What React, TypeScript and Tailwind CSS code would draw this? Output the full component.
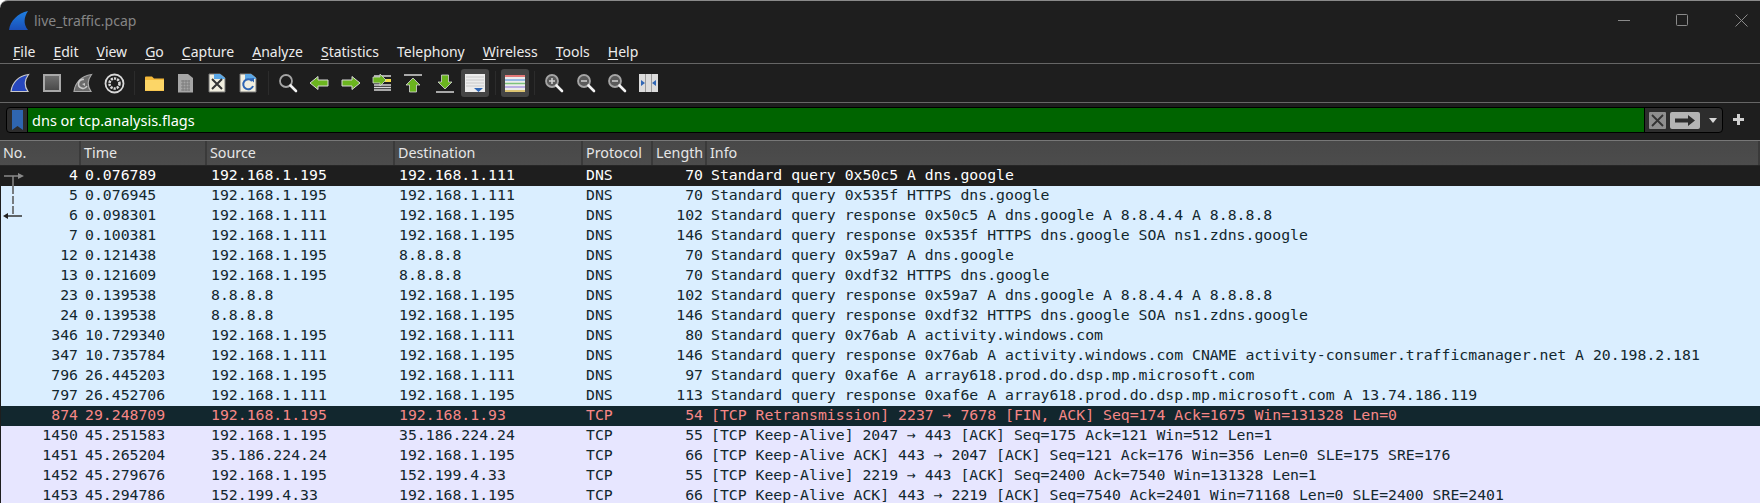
import React from "react";

const A = "192.168.1.195";
const B = "192.168.1.111";

type Row = { no: number; time: string; src: string; dst: string; proto: string; len: number; info: string };

const rows: Row[] = [
  { no: 4, time: "0.076789", src: A, dst: B, proto: "DNS", len: 70, info: "Standard query 0x50c5 A dns.google" },
  { no: 5, time: "0.076945", src: A, dst: B, proto: "DNS", len: 70, info: "Standard query 0x535f HTTPS dns.google" },
  { no: 6, time: "0.098301", src: B, dst: A, proto: "DNS", len: 102, info: "Standard query response 0x50c5 A dns.google A 8.8.4.4 A 8.8.8.8" },
  { no: 7, time: "0.100381", src: B, dst: A, proto: "DNS", len: 146, info: "Standard query response 0x535f HTTPS dns.google SOA ns1.zdns.google" },
  { no: 12, time: "0.121438", src: A, dst: "8.8.8.8", proto: "DNS", len: 70, info: "Standard query 0x59a7 A dns.google" },
  { no: 13, time: "0.121609", src: A, dst: "8.8.8.8", proto: "DNS", len: 70, info: "Standard query 0xdf32 HTTPS dns.google" },
  { no: 23, time: "0.139538", src: "8.8.8.8", dst: A, proto: "DNS", len: 102, info: "Standard query response 0x59a7 A dns.google A 8.8.4.4 A 8.8.8.8" },
  { no: 24, time: "0.139538", src: "8.8.8.8", dst: A, proto: "DNS", len: 146, info: "Standard query response 0xdf32 HTTPS dns.google SOA ns1.zdns.google" },
  { no: 346, time: "10.729340", src: A, dst: B, proto: "DNS", len: 80, info: "Standard query 0x76ab A activity.windows.com" },
  { no: 347, time: "10.735784", src: B, dst: A, proto: "DNS", len: 146, info: "Standard query response 0x76ab A activity.windows.com CNAME activity-consumer.trafficmanager.net A 20.198.2.181" },
  { no: 796, time: "26.445203", src: A, dst: B, proto: "DNS", len: 97, info: "Standard query 0xaf6e A array618.prod.do.dsp.mp.microsoft.com" },
  { no: 797, time: "26.452706", src: B, dst: A, proto: "DNS", len: 113, info: "Standard query response 0xaf6e A array618.prod.do.dsp.mp.microsoft.com A 13.74.186.119" },
  { no: 874, time: "29.248709", src: A, dst: "192.168.1.93", proto: "TCP", len: 54, info: "[TCP Retransmission] 2237 → 7678 [FIN, ACK] Seq=174 Ack=1675 Win=131328 Len=0" },
  { no: 1450, time: "45.251583", src: A, dst: "35.186.224.24", proto: "TCP", len: 55, info: "[TCP Keep-Alive] 2047 → 443 [ACK] Seq=175 Ack=121 Win=512 Len=1" },
  { no: 1451, time: "45.265204", src: "35.186.224.24", dst: A, proto: "TCP", len: 66, info: "[TCP Keep-Alive ACK] 443 → 2047 [ACK] Seq=121 Ack=176 Win=356 Len=0 SLE=175 SRE=176" },
  { no: 1452, time: "45.279676", src: A, dst: "152.199.4.33", proto: "TCP", len: 55, info: "[TCP Keep-Alive] 2219 → 443 [ACK] Seq=2400 Ack=7540 Win=131328 Len=1" },
  { no: 1453, time: "45.294786", src: "152.199.4.33", dst: A, proto: "TCP", len: 66, info: "[TCP Keep-Alive ACK] 443 → 2219 [ACK] Seq=7540 Ack=2401 Win=71168 Len=0 SLE=2400 SRE=2401" },
];

const menus: [string, string][] = [
  ["F", "ile"], ["E", "dit"], ["V", "iew"], ["G", "o"], ["C", "apture"], ["A", "nalyze"], ["S", "tatistics"],
  ["", "Telephony"], ["W", "ireless"], ["T", "ools"], ["H", "elp"],
];

const Shark = ({ size = 20, fill = "#2747bd", stroke = "#c9c9c9" }: { size?: number; fill?: string; stroke?: string }) => (
  <svg width={size} height={size} viewBox="0 0 20 20">
    <path d="M1 18.5C2 10 8 3 18.5 1.5 14.5 7 14 13 18 18.5Z" fill={fill} stroke={stroke} strokeWidth="1.2" />
  </svg>
);

const Slot = ({ children }: { children: React.ReactNode }) => (
  <div className="flex h-8 w-[31.4px] shrink-0 items-center justify-center">{children}</div>
);

const Sep = ({ w }: { w: string }) => (
  <div className={`flex h-7 items-center justify-center ${w}`}>
    <div className="h-6 w-px bg-[#2c2c2c]" />
  </div>
);

const Mag = ({ mark }: { mark?: "plus" | "minus" }) => (
  <svg width="20" height="20" viewBox="0 0 20 20">
    <circle cx="8" cy="8" r="6" fill={mark ? "#5a5a5a" : "none"} stroke="#a5a5a5" strokeWidth="1.8" />
    <path d="M12.5 12.5L18 18" stroke="#f2f2f2" strokeWidth="2.6" strokeLinecap="round" />
    {mark && <path d="M5 8h6" stroke="#d0d0d0" strokeWidth="1.6" />}
    {mark === "plus" && <path d="M8 5v6" stroke="#d0d0d0" strokeWidth="1.6" />}
  </svg>
);

const GreenArrow = ({ dir }: { dir: "left" | "right" }) => (
  <svg width="20" height="16" viewBox="0 0 20 16">
    <path
      d={dir === "left" ? "M1 8L9 1.5V5H19V11H9V14.5Z" : "M19 8L11 1.5V5H1V11H11V14.5Z"}
      fill="#6bb51f"
      stroke="#d8d8d8"
      strokeWidth="1"
    />
  </svg>
);

const Doc = ({ children }: { children: React.ReactNode }) => (
  <svg width="18" height="20" viewBox="0 0 18 20">
    <path d="M1 1H12L17 5V19H1Z" fill="#f1efe0" stroke="#777" strokeWidth="1" />
    <path d="M6 1H12L17 5V6H6Z" fill="#5aa7e6" />
    {children}
  </svg>
);

const Toolbar = () => (
  <div className="flex h-[38px] items-center pl-[4.5px]">
    <Slot><Shark /></Slot>
    <Slot>
      <div className="h-[18px] w-[18px] border-2 border-[#a8a8a8] bg-gradient-to-b from-[#6f6f6f] to-[#4a4a4a]" />
    </Slot>
    <Slot>
      <svg width="20" height="20" viewBox="0 0 20 20">
        <path d="M1 18.5C2 10 8 3 18.5 1.5 14.5 7 14 13 18 18.5Z" fill="#6b6b6b" stroke="#a8a8a8" strokeWidth="1.2" />
        <path d="M11 6.5A4.5 4.5 0 1 0 14 13" fill="none" stroke="#c8c8c8" strokeWidth="1.6" />
        <path d="M9 11l3-1v3z" fill="#c8c8c8" />
      </svg>
    </Slot>
    <Slot>
      <svg width="21" height="21" viewBox="0 0 21 21">
        <circle cx="10.5" cy="10.5" r="9" fill="none" stroke="#d8d8d8" strokeWidth="1.8" />
        <circle cx="10.5" cy="10.5" r="5" fill="none" stroke="#d8d8d8" strokeWidth="2.6" strokeDasharray="2.2 1" />
      </svg>
    </Slot>
    <Sep w="w-[8.5px]" />
    <Slot>
      <svg width="19" height="15" viewBox="0 0 19 15">
        <path d="M0 1.5Q0 .5 1 .5H7L9 2.5H19V15H0Z" fill="#f4b93a" />
        <path d="M0 4H19V14.5H0Z" fill="#fcd667" />
      </svg>
    </Slot>
    <Slot>
      <svg width="17" height="20" viewBox="0 0 17 20">
        <path d="M1 1H11L16 5V19.5H1Z" fill="#a6a6a6" />
        <path d="M4 8H13M4 11H13M4 14H13M4 17H13M6 7V18M9 7V18M12 7V18" stroke="#7c7c7c" strokeWidth="1" />
      </svg>
    </Slot>
    <Slot>
      <Doc>
        <path d="M4 6L14 16M14 6L4 16" stroke="#333" strokeWidth="2" />
      </Doc>
    </Slot>
    <Slot>
      <Doc>
        <path d="M13 8A5 5 0 1 0 14 13" fill="none" stroke="#2f66b5" strokeWidth="2" />
        <path d="M10.5 5.5L15 5V9.5Z" fill="#2f66b5" />
      </Doc>
    </Slot>
    <Sep w="w-[8px]" />
    <Slot><Mag /></Slot>
    <Slot><GreenArrow dir="left" /></Slot>
    <Slot><GreenArrow dir="right" /></Slot>
    <Slot>
      <svg width="20" height="20" viewBox="0 0 20 20">
        <path d="M2 3H19M2 12H19M2 14.5H19M2 17H19" stroke="#d8d8d8" strokeWidth="1.4" />
        <path d="M13 6H19V9H13Z" fill="#f3de4a" />
        <path d="M14 7L8 1V4H1V10H8V13Z" fill="#6bb51f" stroke="#d8d8d8" strokeWidth=".8" />
      </svg>
    </Slot>
    <Slot>
      <svg width="18" height="19" viewBox="0 0 18 19">
        <path d="M0 1H18" stroke="#d8d8d8" strokeWidth="1.6" />
        <path d="M9 4L16 11H12.5V18H5.5V11H2Z" fill="#6bb51f" stroke="#d8d8d8" strokeWidth=".8" />
      </svg>
    </Slot>
    <Slot>
      <svg width="18" height="19" viewBox="0 0 18 19">
        <path d="M0 18H18" stroke="#d8d8d8" strokeWidth="1.6" />
        <path d="M9 15L16 8H12.5V1H5.5V8H2Z" fill="#6bb51f" stroke="#d8d8d8" strokeWidth=".8" />
      </svg>
    </Slot>
    <div className="ml-px flex h-7 w-7 items-center justify-center rounded-[3px] bg-[#454545]">
      <svg width="20" height="18" viewBox="0 0 20 18">
        <rect width="20" height="18" fill="#ececec" />
        <path d="M1 3H19M1 6H19M1 9H19M1 12H19" stroke="#c8c8c8" strokeWidth="1" />
        <path d="M9 14H18L13.5 18Z" fill="#2f66b5" />
      </svg>
    </div>
    <Sep w="w-[12px]" />
    <div className="flex h-7 w-7 items-center justify-center rounded-[3px] bg-[#454545]">
      <svg width="20" height="17" viewBox="0 0 20 17">
        <rect width="20" height="17" fill="#ececec" />
        <path d="M0 1H20" stroke="#e05050" strokeWidth="1.4" />
        <path d="M0 5H20" stroke="#7aa8e0" strokeWidth="1.4" />
        <path d="M0 8.5H20" stroke="#7cc27c" strokeWidth="1.4" />
        <path d="M0 12H20" stroke="#a89ae0" strokeWidth="1.4" />
        <path d="M0 16H20" stroke="#d8b94a" strokeWidth="1.4" />
      </svg>
    </div>
    <Sep w="w-[9.3px]" />
    <Slot><Mag mark="plus" /></Slot>
    <Slot><Mag mark="minus" /></Slot>
    <Slot><Mag mark="minus" /></Slot>
    <Slot>
      <svg width="19" height="18" viewBox="0 0 19 18">
        <rect width="19" height="18" fill="#dcdcdc" />
        <path d="M6.5 0V18M12.5 0V18" stroke="#9a9a9a" strokeWidth="1" />
        <path d="M2 6L6 9 2 12ZM17 6L13 9 17 12Z" fill="#2f66b5" />
      </svg>
    </Slot>
  </div>
);

const FilterBar = () => (
  <div className="flex h-[37px] items-start pt-[4px] pl-[6px]">
    <div className="flex h-[26px] w-[1717px] overflow-hidden rounded-[4px] border border-black bg-[#2d2d2d]">
      <div className="flex w-[21px] shrink-0 items-center justify-center border-r border-black">
        <svg width="11" height="20" viewBox="0 0 11 20">
          <path d="M0 0H11V20L5.5 16 0 20Z" fill="#2f66b0" />
        </svg>
      </div>
      <div className="flex-1 bg-[#006400] pl-[4px] font-['Noto_Sans'] text-[14.5px] leading-[24px] text-white">
        dns or tcp.analysis.flags
      </div>
      <div className="flex w-[78px] shrink-0 items-center border-l border-black pl-[4px]">
        <div className="flex h-[17px] w-[17px] items-center justify-center rounded-[1px] bg-[#8f8f8f]">
          <svg width="15" height="15" viewBox="0 0 15 15">
            <path d="M2 2L13 13M13 2L2 13" stroke="#333" strokeWidth="1.8" />
          </svg>
        </div>
        <div className="ml-[4px] flex h-[17px] w-[30px] items-center justify-center rounded-[2px] bg-[#b4b4b4]">
          <svg width="22" height="11" viewBox="0 0 22 11">
            <path d="M1 3.5H14V0L21 5.5 14 11V7.5H1Z" fill="#2d2d2d" />
          </svg>
        </div>
        <svg className="ml-[9px]" width="8" height="5" viewBox="0 0 8 5">
          <path d="M0 0H8L4 5Z" fill="#d8d8d8" />
        </svg>
      </div>
    </div>
    <svg className="ml-[10px] mt-[7px]" width="11" height="11" viewBox="0 0 11 11">
      <path d="M4 0H7V4H11V7H7V11H4V7H0V4H4Z" fill="#cfcfcf" />
    </svg>
  </div>
);

const cols = ["w-[81px]", "w-[126px]", "w-[188px]", "w-[188px]", "w-[70px]", "w-[54px]", "flex-1"];
const headers = ["No.", "Time", "Source", "Destination", "Protocol", "Length", "Info"];

const PacketRow = ({ row, index }: { row: Row; index: number }) => {
  let colors = row.proto === "DNS" ? "bg-[#daeeff] text-[#12272e]" : "bg-[#e7e6ff] text-[#12272e]";
  if (index === 0) colors = "bg-[#1e1e1e] text-white";
  if (row.no === 874) colors = "bg-[#12272e] text-[#f78787]";
  return (
    <div className={`flex h-5 items-center whitespace-pre pb-[2px] ${colors}`}>
      <div className="w-[79px] pr-[2px] text-right">{row.no}</div>
      <div className="w-[126px] pl-[5px]">{row.time}</div>
      <div className="w-[188px] pl-[5px]">{row.src}</div>
      <div className="w-[188px] pl-[5px]">{row.dst}</div>
      <div className="w-[70px] pl-[4px]">{row.proto}</div>
      <div className="w-[54px] pr-[3px] text-right">{row.len}</div>
      <div className="flex-1 pl-[5px]">{row.info}</div>
    </div>
  );
};

export default function App() {
  return (
    <div className="h-[503px] w-[1760px] overflow-hidden rounded-tl-lg border-t border-[#8a8a8a] bg-[#1e1e1e] font-['Noto_Sans',sans-serif]">
      <div className="flex h-[39px] items-center pl-[9px]">
        <svg width="20" height="20" viewBox="0 0 20 20">
          <defs>
            <linearGradient id="fin" x1="0" y1="0" x2="0" y2="1">
              <stop offset="0" stopColor="#1f7fe0" />
              <stop offset="1" stopColor="#1a4fb8" />
            </linearGradient>
          </defs>
          <path d="M0 19C1 10 9 2 19 0 15 6 14 13 19 19Z" fill="url(#fin)" />
        </svg>
        <span className="ml-[5px] text-[14px] text-[#858585]">live_traffic.pcap</span>
        <div className="ml-auto flex items-center gap-[45.5px] pr-[12.5px]">
          <svg width="13" height="13" viewBox="0 0 13 13"><path d="M0 6.5H12" stroke="#8a8a8a" /></svg>
          <svg width="13" height="13" viewBox="0 0 13 13"><rect x=".5" y=".5" width="11" height="11" rx="1" fill="none" stroke="#8a8a8a" /></svg>
          <svg width="13" height="13" viewBox="0 0 13 13"><path d="M.5 .5L12.5 12.5M12.5 .5L.5 12.5" stroke="#8a8a8a" /></svg>
        </div>
      </div>
      <div className="flex h-6 items-center border-b border-[#666] pl-[4px] text-[14px] text-[#ececec]">
        {menus.map(([u, rest]) => (
          <div key={rest} className="px-[9px]">
            <span className="underline underline-offset-2">{u}</span>
            {rest}
          </div>
        ))}
      </div>
      <Toolbar />
      <div className="h-px bg-[#666]" />
      <FilterBar />
      <div className="flex h-[26px] border-y border-[#262626] border-t-[#777] bg-gradient-to-b from-[#484848] to-[#4c4c4c] text-[14.3px] text-[#e6e6e6]">
        {headers.map((h, i) => (
          <div key={h} className={`flex items-center border-r-2 border-[#3a3a3a] pl-[3px] ${cols[i]}`}>
            {h}
          </div>
        ))}
      </div>
      <div className="relative border-l border-[#1e1e1e] font-['DejaVu_Sans_Mono',monospace] text-[14.8px]">
        {rows.map((r, i) => (
          <PacketRow key={r.no} row={r} index={i} />
        ))}
        <svg className="absolute left-0 top-0" width="26" height="60" viewBox="0 0 26 60">
          <path d="M3 10H18" stroke="#8a8a8a" strokeWidth="1.5" />
          <path d="M17 7L23 10 17 13Z" fill="#8a8a8a" />
          <path d="M12 10V20" stroke="#8a8a8a" strokeWidth="1.5" />
          <path d="M12 20V50" stroke="#555" strokeWidth="1.5" strokeDasharray="8 2" />
          <path d="M6 50H21" stroke="#333" strokeWidth="1.5" />
          <path d="M7 47L2 50 7 53Z" fill="#222" />
        </svg>
      </div>
    </div>
  );
}
